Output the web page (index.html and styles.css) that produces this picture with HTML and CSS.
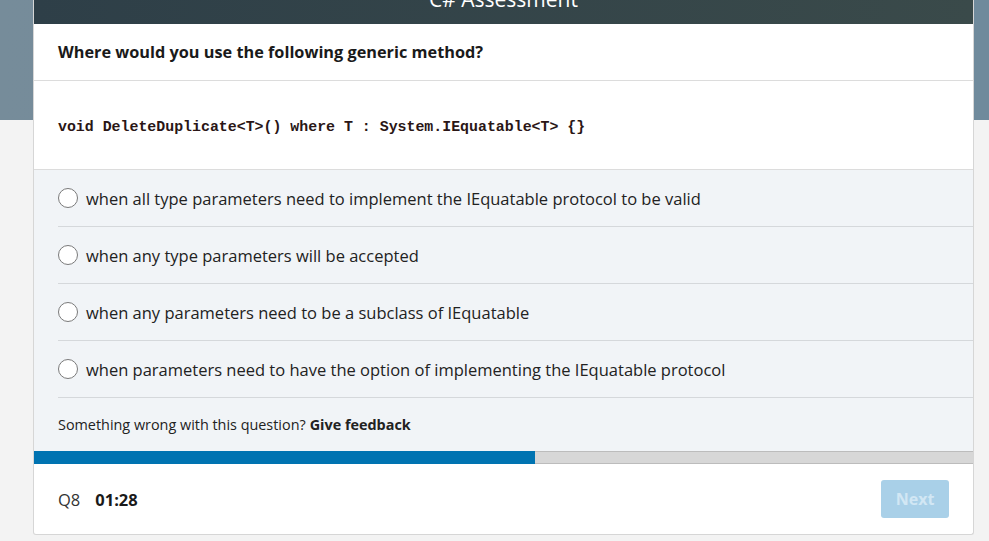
FILE: index.html
```html
<!DOCTYPE html>
<html>
<head>
<meta charset="utf-8">
<link rel="stylesheet" href="styles.css">
</head>
<body>
<div class="band"></div>
<div class="card">
  <div class="header"><span>C# Assessment</span></div>
  <div class="title">Where would you use the following generic method?</div>
  <div class="code"><code>void DeleteDuplicate&lt;T&gt;() where T : System.IEquatable&lt;T&gt; {}</code></div>
  <div class="options">
    <label class="option"><span class="radio"></span><span>when all type parameters need to implement the IEquatable protocol to be valid</span></label>
    <label class="option"><span class="radio"></span><span>when any type parameters will be accepted</span></label>
    <label class="option"><span class="radio"></span><span>when any parameters need to be a subclass of IEquatable</span></label>
    <label class="option"><span class="radio"></span><span>when parameters need to have the option of implementing the IEquatable protocol</span></label>
  </div>
  <div class="feedback">Something wrong with this question? <b>Give feedback</b></div>
  <div class="progress"><div class="fill" style="width: 53.33%"></div></div>
  <div class="footer">
    <span class="qnum">Q8</span>
    <span class="timer">01:28</span>
    <button class="next">Next</button>
  </div>
</div>
</body>
</html>
```

FILE: styles.css
```css
html, body {
  margin: 0;
  padding: 0;
}
body {
  background: #f3f3f3;
  font-family: "Open Sans", "Noto Sans", sans-serif;
  color: #222;
  position: relative;
  width: 989px;
  height: 541px;
  overflow: hidden;
}
.band {
  position: absolute;
  left: 0;
  top: 0;
  width: 100%;
  height: 120px;
  background: linear-gradient(90deg, #768c9a 0%, #6f8a9c 100%);
}
.card {
  position: relative;
  margin: -40px 0 0 33px;
  width: 939px;
  background: #fff;
  border: 1px solid #d6d6d6;
  border-top: none;
  border-radius: 0 0 3px 3px;
}
.header {
  height: 64px;
  background: linear-gradient(90deg, #2e3f48 0%, #3a4a4a 100%);
  color: #fff;
  display: flex;
  align-items: flex-end;
  justify-content: center;
  box-sizing: border-box;
  padding-bottom: 13px;
  font-size: 21px;
  line-height: 24px;
}
.title {
  height: 56px;
  display: flex;
  align-items: center;
  padding-left: 24px;
  font-size: 16.3px;
  font-weight: 700;
  color: #1a1a1a;
  border-bottom: 1px solid #dcdcdc;
}
.code {
  height: 89px;
  box-sizing: border-box;
  padding-top: 4px;
  display: flex;
  align-items: center;
  padding-left: 24px;
  border-bottom: 1px solid #dcdcdc;
}
.code code {
  font-family: "Liberation Mono", monospace;
  font-size: 14.9px;
  font-weight: 700;
  color: #2a1616;
}
.options {
  background: #f1f4f7;
}
.option {
  display: flex;
  align-items: center;
  gap: 8px;
  height: 56px;
  margin-left: 24px;
  border-bottom: 1px solid #d5d8db;
  font-size: 16.5px;
  color: #222;
}
.radio {
  width: 18px;
  height: 18px;
  border: 1px solid #7a7a7a;
  border-radius: 50%;
  background: #fff;
  flex: none;
}
.feedback {
  height: 53px;
  background: #f1f4f7;
  display: flex;
  align-items: center;
  padding-left: 24px;
  font-size: 14.4px;
  color: #222;
}
.feedback b {
  margin-left: 4px;
}
.progress {
  height: 13px;
  background: #d7d7d7;
  box-shadow: inset 0 1px 0 #bcbcbc, inset 0 -1px 0 #bcbcbc;
}
.fill {
  height: 100%;
  background: #0073b1;
}
.footer {
  height: 70px;
  display: flex;
  align-items: center;
  padding: 0 24px;
  font-size: 16.5px;
}
.qnum {
  color: #333;
}
.timer {
  margin-left: 15px;
  font-weight: 700;
  color: #1a1a1a;
}
.next {
  margin-left: auto;
  width: 68px;
  height: 38px;
  border: none;
  border-radius: 3px;
  background: #a9d0e8;
  color: #d2e7f4;
  font-family: "Open Sans", "Noto Sans", sans-serif;
  font-size: 16px;
  font-weight: 700;
  padding: 0;
}
```
